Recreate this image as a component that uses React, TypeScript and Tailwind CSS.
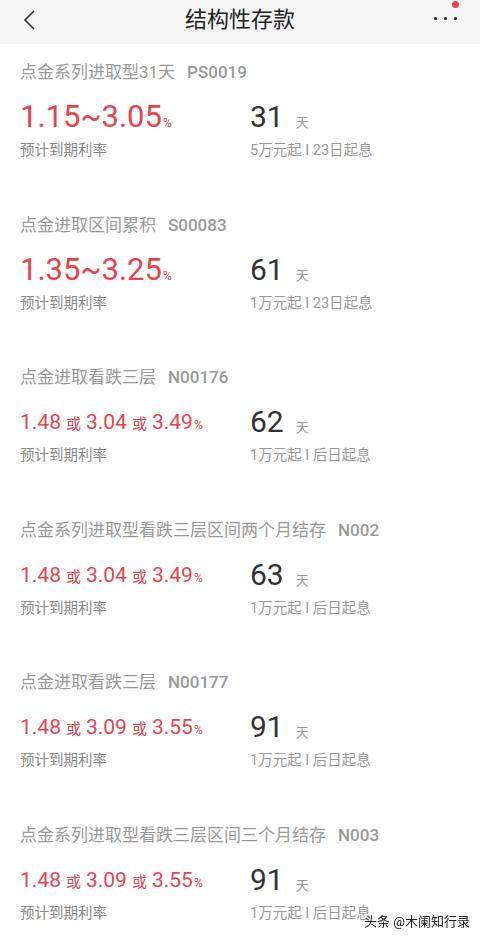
import React from "react";

interface Product {
  name: string;
  code: string;
  rates: string[];
  big: boolean;
  days: string;
  note: string;
}

const products: Product[] = [
  { name: "点金系列进取型31天", code: "PS0019", rates: ["1.15~3.05"], big: true, days: "31", note: "5万元起 I 23日起息" },
  { name: "点金进取区间累积", code: "S00083", rates: ["1.35~3.25"], big: true, days: "61", note: "1万元起 I 23日起息" },
  { name: "点金进取看跌三层", code: "N00176", rates: ["1.48", "3.04", "3.49"], big: false, days: "62", note: "1万元起 I 后日起息" },
  { name: "点金系列进取型看跌三层区间两个月结存", code: "N002", rates: ["1.48", "3.04", "3.49"], big: false, days: "63", note: "1万元起 I 后日起息" },
  { name: "点金进取看跌三层", code: "N00177", rates: ["1.48", "3.09", "3.55"], big: false, days: "91", note: "1万元起 I 后日起息" },
  { name: "点金系列进取型看跌三层区间三个月结存", code: "N003", rates: ["1.48", "3.09", "3.55"], big: false, days: "91", note: "1万元起 I 后日起息" },
];

const font = "font-['Roboto','Noto_Sans_CJK_SC',sans-serif]";

function Rate({ p }: { p: Product }) {
  if (p.big) {
    return (
      <div className="flex items-baseline text-[#e5444f]">
        <span className="text-[31px] leading-[40px]">{p.rates[0]}</span>
        <span className="text-[12px] ml-[1px]">%</span>
      </div>
    );
  }
  return (
    <div className="flex items-baseline text-[#e5444f]">
      {p.rates.map((r, i) => (
        <React.Fragment key={i}>
          {i > 0 && <span className="text-[15px] mx-[5px]">或</span>}
          <span className="text-[21px] leading-[40px]">{r}</span>
        </React.Fragment>
      ))}
      <span className="text-[12px] ml-[1px]">%</span>
    </div>
  );
}

export default function App() {
  return (
    <div className={`w-[480px] bg-white ${font}`}>
      <div className="h-[44px] bg-[#f5f5f5] flex items-center px-[20px]">
        <div className="w-[50px]">
          <svg width="16" height="22" viewBox="0 0 16 22" className="ml-[2px] -mt-[4px]">
            <path d="M12 2 L3 11 L12 20" fill="none" stroke="#333" strokeWidth="1.6" />
          </svg>
        </div>
        <div className="flex-1 text-center text-[22px] text-[#222] leading-none -mt-[4px]">结构性存款</div>
        <div className="w-[50px] flex justify-end">
          <div className="flex items-center gap-[7px] -mt-[8px] mr-[3px] relative">
            <span className="w-[3px] h-[3px] rounded-full bg-[#222]" />
            <span className="w-[3px] h-[3px] rounded-full bg-[#222]" />
            <span className="w-[3px] h-[3px] rounded-full bg-[#222]" />
            <span className="absolute -top-[13px] right-[-2px] w-[7px] h-[7px] rounded-full bg-[#e94550]" />
          </div>
        </div>
      </div>
      {products.map((p, i) => (
        <div key={i} className="h-[152.5px] pt-[18px] px-[20px]">
          <div className="text-[17px] leading-[20px] text-[#999] whitespace-nowrap">
            {p.name}
            <span className="ml-[12px] font-medium">{p.code}</span>
          </div>
          <div className="flex mt-[15px]">
            <div className="w-[230px]">
              <Rate p={p} />
              <div className="text-[14.5px] leading-[20px] text-[#888] mt-[4px]">预计到期利率</div>
            </div>
            <div>
              <div className="flex items-baseline">
                <span className="text-[30px] leading-[40px] text-[#333]">{p.days}</span>
                <span className="text-[13px] text-[#999] ml-[12px]">天</span>
              </div>
              <div className="text-[14.5px] leading-[20px] text-[#999] mt-[4px]">{p.note}</div>
            </div>
          </div>
        </div>
      ))}
      <div className="fixed right-[10px] top-[913px] text-[13px] leading-[18px] text-[#222] [text-shadow:0_0_2px_#fff,0_0_2px_#fff]">
        头条 @木阑知行录
      </div>
    </div>
  );
}
